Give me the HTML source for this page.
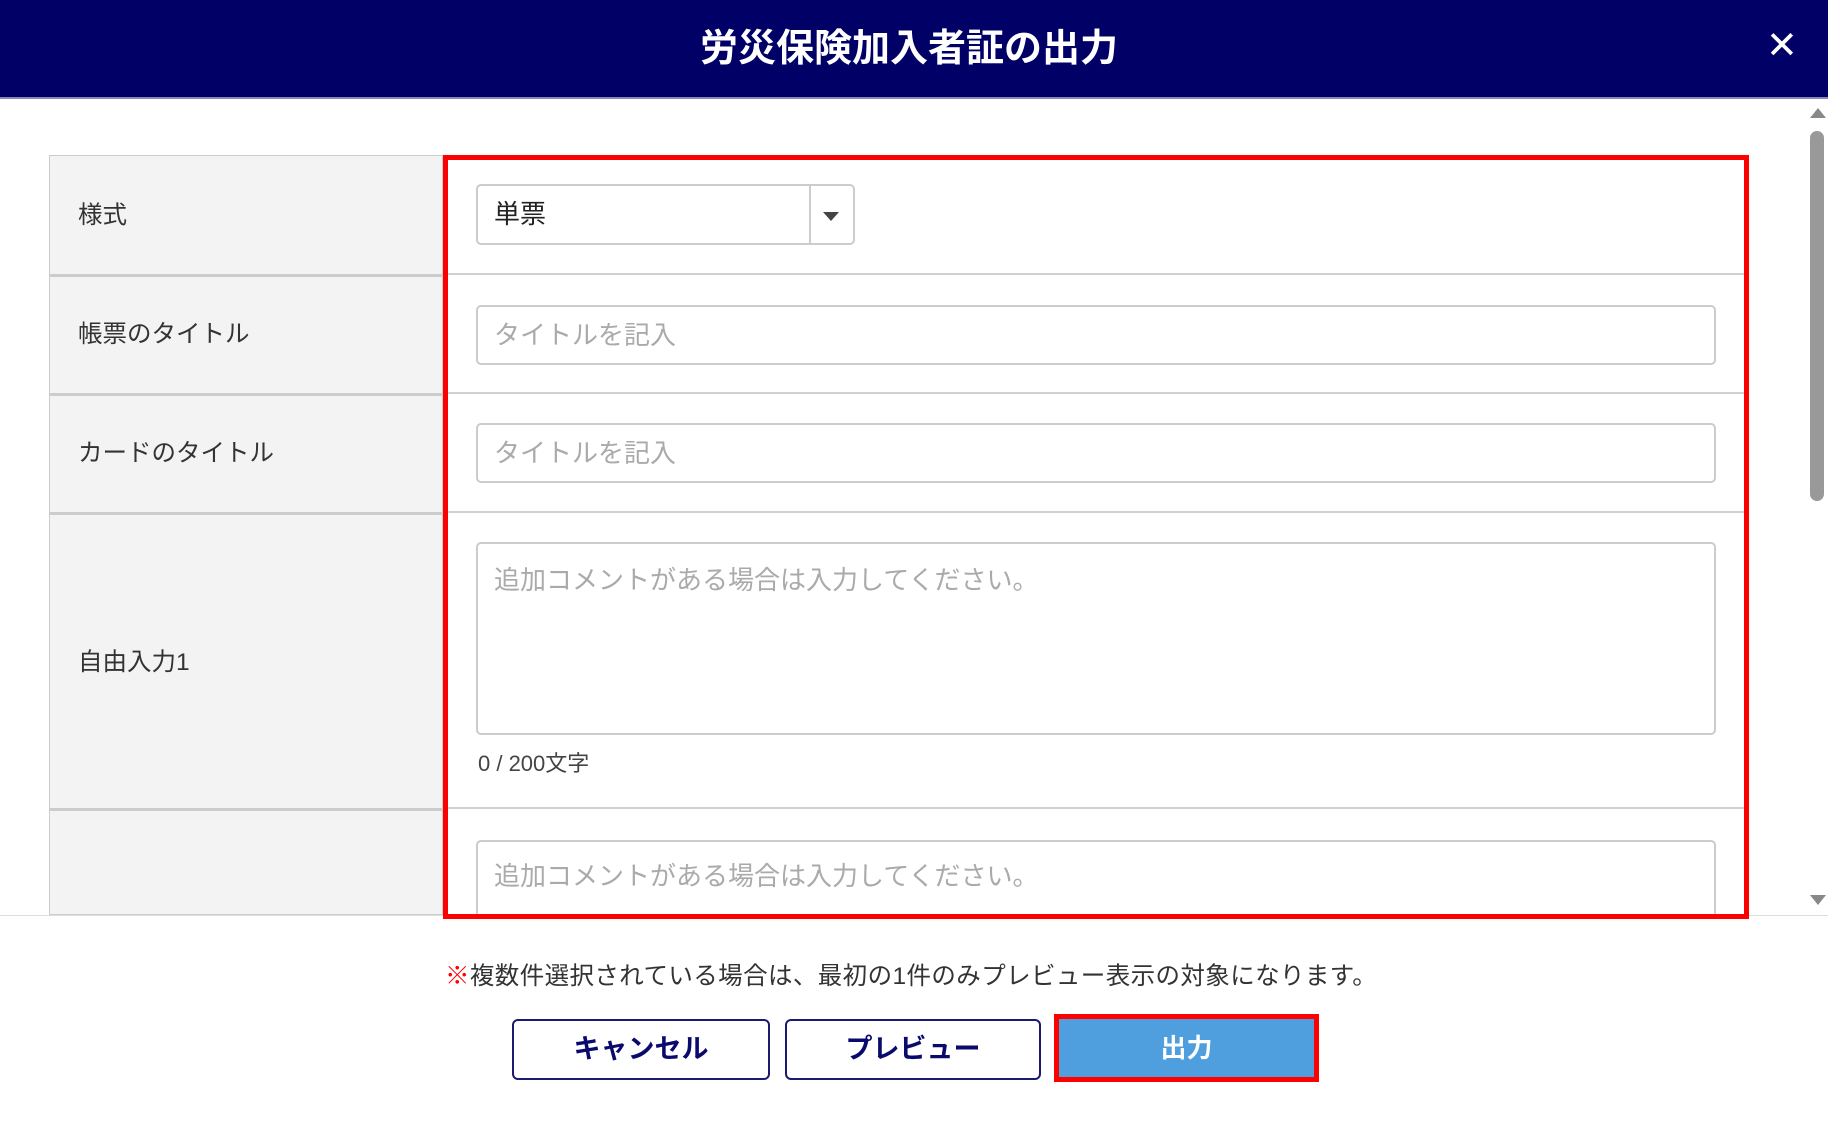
<!DOCTYPE html>
<html><head><meta charset="utf-8"><style>
*{box-sizing:border-box;margin:0;padding:0}
body{width:1828px;height:1125px;background:#fff;font-family:"Liberation Sans","Noto Sans CJK JP",sans-serif;position:relative;overflow:hidden;color:#333}
.abs{position:absolute}
.hdr{left:0;top:0;width:1828px;height:99px;background:#000066;border-bottom:2px solid #8888bb}
.title{left:0;width:1818px;top:25px;text-align:center;color:#fff;font-size:38px;font-weight:bold;line-height:48px}
.lbl{left:49px;width:394px;background:#f3f3f3;border:1px solid #ccc;border-top:none}
.lbl span{position:absolute;left:28px;font-size:24.5px;color:#333;line-height:30px}
.cell{left:443px;width:1302px;border-bottom:2px solid #d0d0d0}
.inp{border:2px solid #ccc;border-radius:5px;background:#fff;color:#aaa;font-size:26px;padding-left:16px}
.btn{border:2px solid #1a1a6e;border-radius:6px;background:#fff;color:#0a0a6e;font-weight:bold;font-size:27px;text-align:center;line-height:57px}
</style></head><body>
<div class="abs hdr"></div>
<div class="abs title">労災保険加入者証の出力</div>
<div class="abs" style="left:1766px;top:26px;color:#fff;font-size:38px;line-height:40px">✕</div>

<div class="abs" style="left:49px;top:155px;width:1696px;height:2px;background:#ccc"></div>
<div class="abs lbl" style="top:156px;height:119px"><span style="top:45px">様式</span></div>
<div class="abs lbl" style="top:275px;height:119px;border-top:2px solid #ccc"><span style="top:43px">帳票のタイトル</span></div>
<div class="abs lbl" style="top:394px;height:119px;border-top:2px solid #ccc"><span style="top:43px">カードのタイトル</span></div>
<div class="abs lbl" style="top:513px;height:296px;border-top:2px solid #ccc"><span style="top:133px">自由入力1</span></div>
<div class="abs lbl" style="top:809px;height:106px;border-top:2px solid #ccc"></div>

<div class="abs cell" style="top:156px;height:119px"></div>
<div class="abs cell" style="top:275px;height:119px"></div>
<div class="abs cell" style="top:394px;height:119px"></div>
<div class="abs cell" style="top:513px;height:296px"></div>

<div class="abs inp" style="left:476px;top:184px;width:379px;height:61px;color:#222;line-height:57px">単票</div>
<div class="abs" style="left:809px;top:186px;width:2px;height:57px;background:#ccc"></div>
<div class="abs" style="left:823px;top:212px;width:0;height:0;border-left:8px solid transparent;border-right:8px solid transparent;border-top:9px solid #444"></div>

<div class="abs inp" style="left:476px;top:305px;width:1240px;height:60px;line-height:56px">タイトルを記入</div>
<div class="abs inp" style="left:476px;top:423px;width:1240px;height:60px;line-height:56px">タイトルを記入</div>
<div class="abs inp" style="left:476px;top:542px;width:1240px;height:193px;padding-top:21px;line-height:30px">追加コメントがある場合は入力してください。</div>
<div class="abs" style="left:478px;top:746px;font-size:22px;color:#444">0 / 200文字</div>
<div class="abs inp" style="left:476px;top:840px;width:1240px;height:120px;padding-top:19px;line-height:30px">追加コメントがある場合は入力してください。</div>

<div class="abs" style="left:0;top:915px;width:1828px;height:210px;background:#fff;border-top:1px solid #ddd"></div>
<div class="abs" style="left:443px;top:155px;width:1306px;height:764px;border:5px solid #f00"></div>

<div class="abs" style="left:1807px;top:100px;width:21px;height:815px;background:#fff"></div>
<div class="abs" style="left:1810px;top:108px;width:0;height:0;border-left:8px solid transparent;border-right:8px solid transparent;border-bottom:10px solid #888"></div>
<div class="abs" style="left:1810px;top:131px;width:14px;height:370px;background:#999;border-radius:7px"></div>
<div class="abs" style="left:1810px;top:895px;width:0;height:0;border-left:8px solid transparent;border-right:8px solid transparent;border-top:10px solid #888"></div>

<div class="abs" style="left:445px;top:962px;font-size:24.5px;letter-spacing:0.4px;color:#333;line-height:30px;white-space:nowrap"><span style="color:#f00">※</span>複数件選択されている場合は、最初の1件のみプレビュー表示の対象になります。</div>
<div class="abs btn" style="left:512px;top:1019px;width:258px;height:61px">キャンセル</div>
<div class="abs btn" style="left:785px;top:1019px;width:256px;height:61px">プレビュー</div>
<div class="abs" style="left:1054px;top:1014px;width:265px;height:68px;border:5px solid #f00;background:#4f9fdf;color:#fff;font-weight:bold;font-size:26px;text-align:center;line-height:58px">出力</div>
</body></html>
